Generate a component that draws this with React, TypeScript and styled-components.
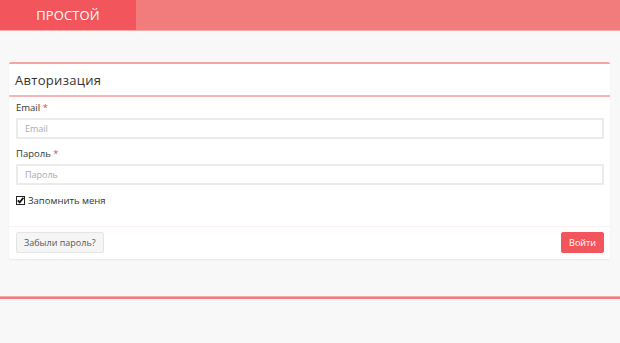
import { createGlobalStyle } from 'styled-components'
import styled from 'styled-components'

const GlobalStyle = createGlobalStyle`
  html, body {
    margin: 0;
    padding: 0;
    background: #f8f8f8;
    font-family: "Open Sans", "Liberation Sans", sans-serif;
    color: #333;
  }
  * { box-sizing: border-box; }
`

export default function App() {
  return (
    <>
      <GlobalStyle />
      <Navbar>
        <Brand>ПРОСТОЙ</Brand>
      </Navbar>

      <Container>
        <Panel>
          <PanelHeading>
            <Title>Авторизация</Title>
          </PanelHeading>

          <PanelBody>
            <FormGroup>
              <Label>
                Email <Required>*</Required>
              </Label>
              <Input type="email" placeholder="Email" />
            </FormGroup>

            <FormGroup>
              <Label>
                Пароль <Required>*</Required>
              </Label>
              <Input type="password" placeholder="Пароль" />
            </FormGroup>

            <CheckRow>
              <CheckBox>
                <svg width="9" height="9" viewBox="0 0 9 9">
                  <rect x="0.5" y="0.5" width="8" height="8" fill="#fff" stroke="#222" strokeWidth="1" />
                  <path d="M1.8 4.4 L3.7 6.4 L7.4 1.8" fill="none" stroke="#111" strokeWidth="1.8" />
                </svg>
              </CheckBox>
              Запомнить меня
            </CheckRow>
          </PanelBody>

          <PanelFooter>
            <Button>Забыли пароль?</Button>
            <Button $primary>Войти</Button>
          </PanelFooter>
        </Panel>
      </Container>

      <Divider />
    </>
  )
}

const Navbar = styled.div`
  height: 31px;
  background: #f27b7c;
  display: flex;
  border-bottom: 1px solid #f6a9a9;
`

const Brand = styled.div`
  width: 136px;
  background: #f2555c;
  color: #fff;
  font-size: 13px;
  display: flex;
  align-items: center;
  justify-content: center;
  letter-spacing: 0.1px;
`

const Container = styled.div`
  padding: 31px 10px 0 9px;
`

const Panel = styled.div`
  background: #fff;
  border-top: 2px solid #f6a3a4;
  border-radius: 2px;
  box-shadow: 0 1px 2px rgba(0, 0, 0, 0.06);
`

const PanelHeading = styled.div`
  height: 33px;
  padding: 0 6px;
  display: flex;
  align-items: center;
  border-bottom: 2px solid #f8b3b4;
`

const Title = styled.h3`
  margin: 0;
  font-size: 13px;
  font-weight: 400;
  color: #333;
  letter-spacing: 0.3px;
`

const PanelBody = styled.div`
  padding: 3px 6px 18px 7px;
  display: flex;
  flex-direction: column;
  gap: 7px;
`

const FormGroup = styled.div`
  display: flex;
  flex-direction: column;
  gap: 3px;
`

const Label = styled.label`
  font-size: 9.5px;
  line-height: 15px;
  color: #333;
`

const Required = styled.span`
  color: #e8474f;
`

const Input = styled.input`
  height: 21px;
  width: 100%;
  border: 2px solid #ebebeb;
  border-radius: 1px;
  padding: 0 7px;
  font-family: inherit;
  font-size: 9px;
  color: #555;
  outline: none;

  &::placeholder {
    color: #aaa;
  }
`

const CheckRow = styled.label`
  display: flex;
  align-items: center;
  gap: 3px;
  font-size: 9.5px;
  line-height: 15px;
  color: #333;
  margin-top: 1px;
`

const CheckBox = styled.span`
  display: inline-flex;
  width: 9px;
  height: 9px;
`

const PanelFooter = styled.div`
  border-top: 1px solid #fbf1f1;
  padding: 5px 6px 6px 7px;
  display: flex;
  justify-content: space-between;
  align-items: center;
`

const Button = styled.button<{ $primary?: boolean }>`
  height: 21px;
  padding: 0 7px;
  font-family: inherit;
  font-size: 9px;
  border-radius: 2px;
  cursor: pointer;
  background: ${(p) => (p.$primary ? '#f2555c' : '#f5f5f5')};
  color: ${(p) => (p.$primary ? '#fff' : '#555')};
  border: 1px solid ${(p) => (p.$primary ? '#f2555c' : '#e4e4e4')};
`

const Divider = styled.div`
  margin-top: 37px;
  height: 3px;
  background: #f27b7c;
  border-top: 1px solid #f6a9a9;
`
